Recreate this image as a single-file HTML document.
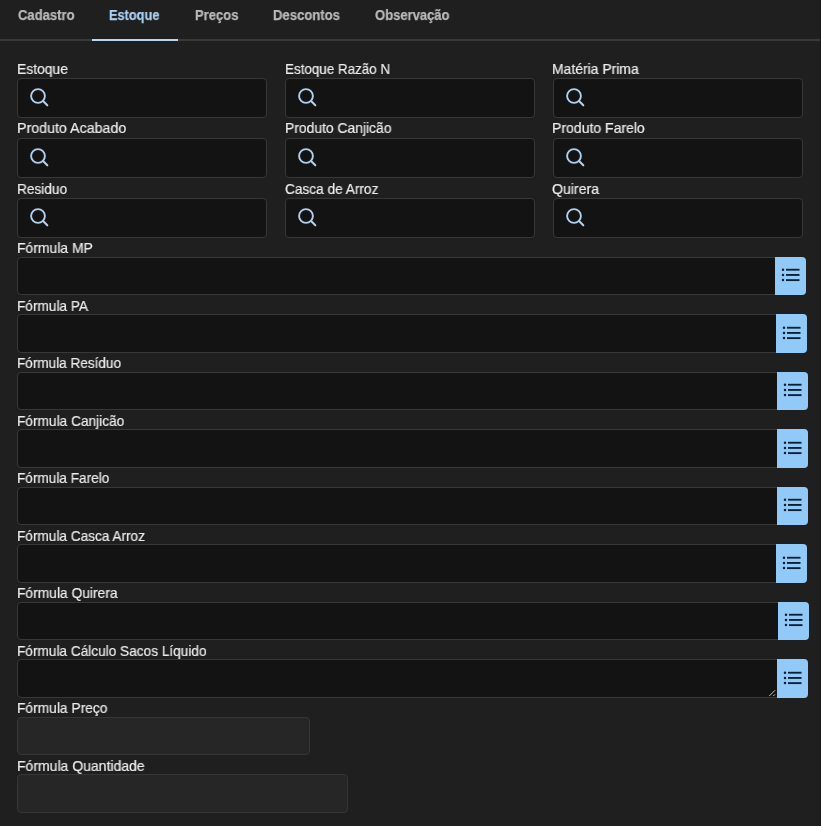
<!DOCTYPE html>
<html><head><meta charset="utf-8"><style>
html,body{margin:0;padding:0;width:821px;height:826px;overflow:hidden;background:#1f1f1f;font-family:"Liberation Sans",sans-serif}
.tab{position:absolute;top:7px;font-size:14px;font-weight:bold;color:#bababa;line-height:16px;white-space:nowrap;transform:scaleX(0.93);transform-origin:0 0;will-change:transform;-webkit-text-stroke:0.25px #bababa}
.tab.act{color:#a9cff0;-webkit-text-stroke:0.25px #a9cff0}
.lbl{position:absolute;font-size:14.5px;color:#ececec;line-height:16px;white-space:nowrap;transform:scaleX(0.935);transform-origin:0 0;will-change:transform;-webkit-text-stroke:0.2px #ececec}
.box{position:absolute;box-sizing:border-box;background:#131313;border:1px solid #383838;border-radius:4px}
.box.dis{background:#262626;border-color:#363636}
.btn{position:absolute;box-sizing:border-box;background:#91caf8;border-radius:0 4px 4px 0}
</style></head><body>
<div class="tab" style="left:18px;transform:scaleX(0.93)">Cadastro</div>
<div class="tab act" style="left:109.3px;transform:scaleX(0.912)">Estoque</div>
<div class="tab" style="left:195px;transform:scaleX(0.93)">Preços</div>
<div class="tab" style="left:273px;transform:scaleX(0.935)">Descontos</div>
<div class="tab" style="left:374.5px;transform:scaleX(0.93)">Observação</div>
<div style="position:absolute;left:0;top:39px;width:820px;height:2px;background:#393939"></div>
<div style="position:absolute;left:92px;top:39px;width:85.5px;height:2px;background:#b9d6ee"></div>
<div style="position:absolute;left:820px;top:0;width:1px;height:826px;background:#171717"></div>
<div class="lbl" style="left:17px;top:60.5px;transform:scaleX(0.9565)">Estoque</div>
<div class="box" style="left:17px;top:78px;width:250px;height:40px"></div>
<svg width="22" height="22" viewBox="0 0 22 22" style="position:absolute;left:28.5px;top:86.7px"><circle cx="9" cy="9" r="6.9" fill="none" stroke="#afcfec" stroke-width="1.9"/><line x1="14.1" y1="14.1" x2="18.3" y2="18.3" stroke="#afcfec" stroke-width="2.1" stroke-linecap="round"/></svg>
<div class="lbl" style="left:285px;top:60.5px;transform:scaleX(0.9247)">Estoque Razão N</div>
<div class="box" style="left:285px;top:78px;width:250px;height:40px"></div>
<svg width="22" height="22" viewBox="0 0 22 22" style="position:absolute;left:296.5px;top:86.7px"><circle cx="9" cy="9" r="6.9" fill="none" stroke="#afcfec" stroke-width="1.9"/><line x1="14.1" y1="14.1" x2="18.3" y2="18.3" stroke="#afcfec" stroke-width="2.1" stroke-linecap="round"/></svg>
<div class="lbl" style="left:552.3px;top:60.5px;transform:scaleX(0.9602)">Matéria Prima</div>
<div class="box" style="left:553px;top:78px;width:250px;height:40px"></div>
<svg width="22" height="22" viewBox="0 0 22 22" style="position:absolute;left:564.5px;top:86.7px"><circle cx="9" cy="9" r="6.9" fill="none" stroke="#afcfec" stroke-width="1.9"/><line x1="14.1" y1="14.1" x2="18.3" y2="18.3" stroke="#afcfec" stroke-width="2.1" stroke-linecap="round"/></svg>
<div class="lbl" style="left:17px;top:119.8px;transform:scaleX(0.9818)">Produto Acabado</div>
<div class="box" style="left:17px;top:138px;width:250px;height:40px"></div>
<svg width="22" height="22" viewBox="0 0 22 22" style="position:absolute;left:28.5px;top:146.7px"><circle cx="9" cy="9" r="6.9" fill="none" stroke="#afcfec" stroke-width="1.9"/><line x1="14.1" y1="14.1" x2="18.3" y2="18.3" stroke="#afcfec" stroke-width="2.1" stroke-linecap="round"/></svg>
<div class="lbl" style="left:285px;top:119.8px;transform:scaleX(0.9574)">Produto Canjicão</div>
<div class="box" style="left:285px;top:138px;width:250px;height:40px"></div>
<svg width="22" height="22" viewBox="0 0 22 22" style="position:absolute;left:296.5px;top:146.7px"><circle cx="9" cy="9" r="6.9" fill="none" stroke="#afcfec" stroke-width="1.9"/><line x1="14.1" y1="14.1" x2="18.3" y2="18.3" stroke="#afcfec" stroke-width="2.1" stroke-linecap="round"/></svg>
<div class="lbl" style="left:552.3px;top:119.8px;transform:scaleX(0.9677)">Produto Farelo</div>
<div class="box" style="left:553px;top:138px;width:250px;height:40px"></div>
<svg width="22" height="22" viewBox="0 0 22 22" style="position:absolute;left:564.5px;top:146.7px"><circle cx="9" cy="9" r="6.9" fill="none" stroke="#afcfec" stroke-width="1.9"/><line x1="14.1" y1="14.1" x2="18.3" y2="18.3" stroke="#afcfec" stroke-width="2.1" stroke-linecap="round"/></svg>
<div class="lbl" style="left:17px;top:181.1px;transform:scaleX(0.9406)">Residuo</div>
<div class="box" style="left:17px;top:198px;width:250px;height:40px"></div>
<svg width="22" height="22" viewBox="0 0 22 22" style="position:absolute;left:28.5px;top:206.7px"><circle cx="9" cy="9" r="6.9" fill="none" stroke="#afcfec" stroke-width="1.9"/><line x1="14.1" y1="14.1" x2="18.3" y2="18.3" stroke="#afcfec" stroke-width="2.1" stroke-linecap="round"/></svg>
<div class="lbl" style="left:285px;top:181.1px;transform:scaleX(0.9415)">Casca de Arroz</div>
<div class="box" style="left:285px;top:198px;width:250px;height:40px"></div>
<svg width="22" height="22" viewBox="0 0 22 22" style="position:absolute;left:296.5px;top:206.7px"><circle cx="9" cy="9" r="6.9" fill="none" stroke="#afcfec" stroke-width="1.9"/><line x1="14.1" y1="14.1" x2="18.3" y2="18.3" stroke="#afcfec" stroke-width="2.1" stroke-linecap="round"/></svg>
<div class="lbl" style="left:552.3px;top:181.1px;transform:scaleX(0.9724)">Quirera</div>
<div class="box" style="left:553px;top:198px;width:250px;height:40px"></div>
<svg width="22" height="22" viewBox="0 0 22 22" style="position:absolute;left:564.5px;top:206.7px"><circle cx="9" cy="9" r="6.9" fill="none" stroke="#afcfec" stroke-width="1.9"/><line x1="14.1" y1="14.1" x2="18.3" y2="18.3" stroke="#afcfec" stroke-width="2.1" stroke-linecap="round"/></svg>
<div class="lbl" style="left:17px;top:240.10000000000002px;transform:scaleX(0.9612)">Fórmula MP</div>
<div class="box" style="left:17px;top:256.6px;width:758.6px;height:38.5px;border-radius:4px 0 0 4px"></div>
<div class="btn" style="left:774.6px;top:256.6px;width:31.3px;height:38.6px"></div>
<svg width="20" height="16" viewBox="0 0 20 16" style="position:absolute;left:780.8000000000001px;top:267.3px"><circle cx="2" cy="2.7" r="1.25" fill="#0b1f33"/><circle cx="2" cy="7.9" r="1.25" fill="#0b1f33"/><circle cx="2" cy="13.1" r="1.25" fill="#0b1f33"/><rect x="5" y="1.8" width="13.5" height="1.85" fill="#0b1f33"/><rect x="5" y="7" width="13.5" height="1.85" fill="#0b1f33"/><rect x="5" y="12.2" width="13.5" height="1.85" fill="#0b1f33"/></svg>
<div class="lbl" style="left:17px;top:297.63px;transform:scaleX(0.9415)">Fórmula PA</div>
<div class="box" style="left:17px;top:314.13px;width:759.7px;height:38.5px;border-radius:4px 0 0 4px"></div>
<div class="btn" style="left:775.7px;top:314.13px;width:31.3px;height:38.6px"></div>
<svg width="20" height="16" viewBox="0 0 20 16" style="position:absolute;left:781.9000000000001px;top:324.83px"><circle cx="2" cy="2.7" r="1.25" fill="#0b1f33"/><circle cx="2" cy="7.9" r="1.25" fill="#0b1f33"/><circle cx="2" cy="13.1" r="1.25" fill="#0b1f33"/><rect x="5" y="1.8" width="13.5" height="1.85" fill="#0b1f33"/><rect x="5" y="7" width="13.5" height="1.85" fill="#0b1f33"/><rect x="5" y="12.2" width="13.5" height="1.85" fill="#0b1f33"/></svg>
<div class="lbl" style="left:17px;top:355.16px;transform:scaleX(0.935)">Fórmula Resíduo</div>
<div class="box" style="left:17px;top:371.66px;width:760.7px;height:38.5px;border-radius:4px 0 0 4px"></div>
<div class="btn" style="left:776.7px;top:371.66px;width:31.3px;height:38.6px"></div>
<svg width="20" height="16" viewBox="0 0 20 16" style="position:absolute;left:782.9000000000001px;top:382.36px"><circle cx="2" cy="2.7" r="1.25" fill="#0b1f33"/><circle cx="2" cy="7.9" r="1.25" fill="#0b1f33"/><circle cx="2" cy="13.1" r="1.25" fill="#0b1f33"/><rect x="5" y="1.8" width="13.5" height="1.85" fill="#0b1f33"/><rect x="5" y="7" width="13.5" height="1.85" fill="#0b1f33"/><rect x="5" y="12.2" width="13.5" height="1.85" fill="#0b1f33"/></svg>
<div class="lbl" style="left:17px;top:412.69000000000005px;transform:scaleX(0.9444)">Fórmula Canjicão</div>
<div class="box" style="left:17px;top:429.19000000000005px;width:760.7px;height:38.5px;border-radius:4px 0 0 4px"></div>
<div class="btn" style="left:776.7px;top:429.19000000000005px;width:31.3px;height:38.6px"></div>
<svg width="20" height="16" viewBox="0 0 20 16" style="position:absolute;left:782.9000000000001px;top:439.89000000000004px"><circle cx="2" cy="2.7" r="1.25" fill="#0b1f33"/><circle cx="2" cy="7.9" r="1.25" fill="#0b1f33"/><circle cx="2" cy="13.1" r="1.25" fill="#0b1f33"/><rect x="5" y="1.8" width="13.5" height="1.85" fill="#0b1f33"/><rect x="5" y="7" width="13.5" height="1.85" fill="#0b1f33"/><rect x="5" y="12.2" width="13.5" height="1.85" fill="#0b1f33"/></svg>
<div class="lbl" style="left:17px;top:470.22px;transform:scaleX(0.9387)">Fórmula Farelo</div>
<div class="box" style="left:17px;top:486.72px;width:760.6px;height:38.5px;border-radius:4px 0 0 4px"></div>
<div class="btn" style="left:776.6px;top:486.72px;width:31.3px;height:38.6px"></div>
<svg width="20" height="16" viewBox="0 0 20 16" style="position:absolute;left:782.8000000000001px;top:497.42px"><circle cx="2" cy="2.7" r="1.25" fill="#0b1f33"/><circle cx="2" cy="7.9" r="1.25" fill="#0b1f33"/><circle cx="2" cy="13.1" r="1.25" fill="#0b1f33"/><rect x="5" y="1.8" width="13.5" height="1.85" fill="#0b1f33"/><rect x="5" y="7" width="13.5" height="1.85" fill="#0b1f33"/><rect x="5" y="12.2" width="13.5" height="1.85" fill="#0b1f33"/></svg>
<div class="lbl" style="left:17px;top:527.75px;transform:scaleX(0.9397)">Fórmula Casca Arroz</div>
<div class="box" style="left:17px;top:544.25px;width:759.7px;height:38.5px;border-radius:4px 0 0 4px"></div>
<div class="btn" style="left:775.7px;top:544.25px;width:31.3px;height:38.6px"></div>
<svg width="20" height="16" viewBox="0 0 20 16" style="position:absolute;left:781.9000000000001px;top:554.95px"><circle cx="2" cy="2.7" r="1.25" fill="#0b1f33"/><circle cx="2" cy="7.9" r="1.25" fill="#0b1f33"/><circle cx="2" cy="13.1" r="1.25" fill="#0b1f33"/><rect x="5" y="1.8" width="13.5" height="1.85" fill="#0b1f33"/><rect x="5" y="7" width="13.5" height="1.85" fill="#0b1f33"/><rect x="5" y="12.2" width="13.5" height="1.85" fill="#0b1f33"/></svg>
<div class="lbl" style="left:17px;top:585.28px;transform:scaleX(0.9528)">Fórmula Quirera</div>
<div class="box" style="left:17px;top:601.78px;width:761.6px;height:38.5px;border-radius:4px 0 0 4px"></div>
<div class="btn" style="left:777.6px;top:601.78px;width:31.3px;height:38.6px"></div>
<svg width="20" height="16" viewBox="0 0 20 16" style="position:absolute;left:783.8000000000001px;top:612.48px"><circle cx="2" cy="2.7" r="1.25" fill="#0b1f33"/><circle cx="2" cy="7.9" r="1.25" fill="#0b1f33"/><circle cx="2" cy="13.1" r="1.25" fill="#0b1f33"/><rect x="5" y="1.8" width="13.5" height="1.85" fill="#0b1f33"/><rect x="5" y="7" width="13.5" height="1.85" fill="#0b1f33"/><rect x="5" y="12.2" width="13.5" height="1.85" fill="#0b1f33"/></svg>
<div class="lbl" style="left:17px;top:642.8100000000001px;transform:scaleX(0.9406)">Fórmula Cálculo Sacos Líquido</div>
<div class="box" style="left:17px;top:659.3100000000001px;width:760.6px;height:38.5px;border-radius:4px 0 0 4px"></div>
<div class="btn" style="left:776.6px;top:659.3100000000001px;width:31.3px;height:38.6px"></div>
<svg width="20" height="16" viewBox="0 0 20 16" style="position:absolute;left:782.8000000000001px;top:670.0100000000001px"><circle cx="2" cy="2.7" r="1.25" fill="#0b1f33"/><circle cx="2" cy="7.9" r="1.25" fill="#0b1f33"/><circle cx="2" cy="13.1" r="1.25" fill="#0b1f33"/><rect x="5" y="1.8" width="13.5" height="1.85" fill="#0b1f33"/><rect x="5" y="7" width="13.5" height="1.85" fill="#0b1f33"/><rect x="5" y="12.2" width="13.5" height="1.85" fill="#0b1f33"/></svg>
<svg width="10" height="10" style="position:absolute;left:766px;top:687px"><line x1="3.3" y1="9" x2="9" y2="3.3" stroke="#c8c8c8" stroke-width="1"/><line x1="7.3" y1="9" x2="9" y2="7.3" stroke="#c8c8c8" stroke-width="1"/></svg>
<div class="lbl" style="left:17px;top:700.34px;transform:scaleX(0.9509)">Fórmula Preço</div>
<div class="box dis" style="left:17px;top:716.84px;width:293px;height:38.5px"></div>
<div class="lbl" style="left:17px;top:757.87px;transform:scaleX(0.9659)">Fórmula Quantidade</div>
<div class="box dis" style="left:17px;top:774.37px;width:331px;height:38.5px"></div>
</body></html>
